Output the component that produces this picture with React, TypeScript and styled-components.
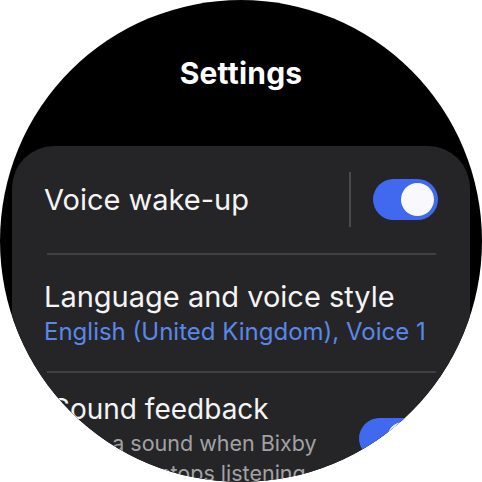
import React from "react";
import styled, { createGlobalStyle } from "styled-components";

const GlobalStyle = createGlobalStyle`
  html, body {
    margin: 0;
    padding: 0;
    background: #ffffff;
  }
  body {
    font-family: Inter, Roboto, "Noto Sans", sans-serif;
    -webkit-font-smoothing: antialiased;
  }
`;

const Watch = styled.div`
  width: 482px;
  height: 482px;
  border-radius: 50%;
  background: #000;
  overflow: hidden;
  display: flex;
  flex-direction: column;
  align-items: stretch;
`;

const Title = styled.h1`
  margin: 0;
  padding-top: 53px;
  height: 146px;
  flex: none;
  box-sizing: border-box;
  text-align: center;
  color: #fff;
  font-size: 30px;
  font-weight: 700;
  line-height: 40px;
  letter-spacing: 0.2px;
`;

const Card = styled.div`
  margin: 0 12px;
  background: #252527;
  border-radius: 42px;
  display: flex;
  flex-direction: column;
  flex: none;
`;

const Row = styled.div<{ $height: number; $top?: boolean; $left?: number; $right?: number }>`
  height: ${(p) => p.$height}px;
  box-sizing: border-box;
  padding: ${(p) => (p.$top ? "18px" : "0")} ${(p) => p.$right ?? 32}px 0
    ${(p) => p.$left ?? 32}px;
  display: flex;
  align-items: ${(p) => (p.$top ? "flex-start" : "center")};
  gap: 22px;
`;

const TextBlock = styled.div`
  flex: 1;
  min-width: 0;
  display: flex;
  flex-direction: column;
`;

const Label = styled.div<{ $size?: number }>`
  color: #f4f4f4;
  font-size: ${(p) => p.$size ?? 29}px;
  line-height: 36px;
  white-space: nowrap;
`;

const Sub = styled.div<{ $tone: "accent" | "muted" }>`
  color: ${(p) => (p.$tone === "accent" ? "#5a88e8" : "#a2a2a4")};
  font-size: ${(p) => (p.$tone === "accent" ? "24px" : "21.5px")};
  line-height: ${(p) => (p.$tone === "accent" ? "30px" : "28px")};
  margin-top: 2px;
  white-space: nowrap;
`;

const Divider = styled.div`
  height: 2px;
  background: #414143;
  margin: 0 34px 0 35px;
`;

const VSep = styled.div`
  width: 2px;
  height: 55px;
  background: #4a4a4c;
  flex: none;
`;

const Switch = styled.div<{ $on: boolean; $offset?: number }>`
  width: 65px;
  height: 41px;
  margin-top: ${(p) => p.$offset ?? 0}px;
  border-radius: 21px;
  background: ${(p) => (p.$on ? "#4169f0" : "#555")};
  flex: none;
  display: flex;
  align-items: center;
  justify-content: ${(p) => (p.$on ? "flex-end" : "flex-start")};
  padding: 0 4px;
  box-sizing: border-box;
`;

const Knob = styled.div`
  width: 33px;
  height: 33px;
  border-radius: 50%;
  background: #f8f8fd;
`;

export default function App() {
  return (
    <>
      <GlobalStyle />
      <Watch>
        <Title>Settings</Title>
        <Card>
          <Row $height={107}>
            <TextBlock>
              <Label>Voice wake-up</Label>
            </TextBlock>
            <VSep />
            <Switch $on>
              <Knob />
            </Switch>
          </Row>
          <Divider />
          <Row $height={116}>
            <TextBlock>
              <Label>Language and voice style</Label>
              <Sub $tone="accent">English (United Kingdom), Voice 1</Sub>
            </TextBlock>
          </Row>
          <Divider />
          <Row $height={140} $top $left={40} $right={46}>
            <TextBlock>
              <Label $size={28}>Sound feedback</Label>
              <Sub $tone="muted">Plays a sound when Bixby</Sub>
              <Sub $tone="muted">starts and stops listening.</Sub>
            </TextBlock>
            <Switch $on $offset={27}>
              <Knob />
            </Switch>
          </Row>
        </Card>
      </Watch>
    </>
  );
}
